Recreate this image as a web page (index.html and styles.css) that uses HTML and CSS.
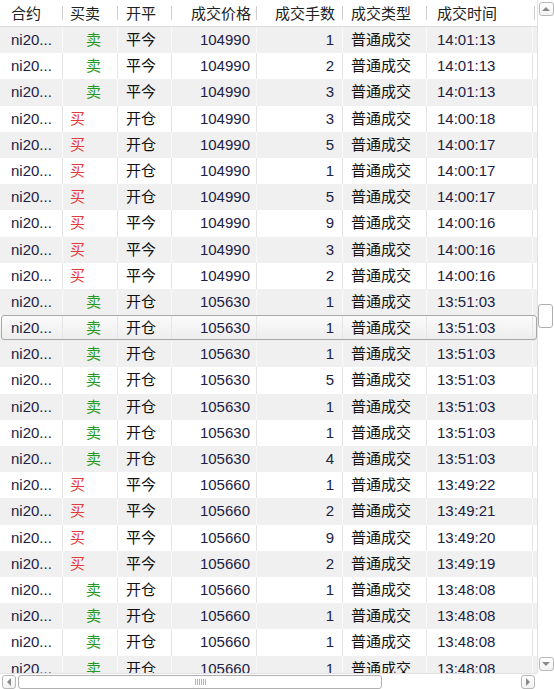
FILE: index.html
```html
<!DOCTYPE html>
<html>
<head>
<meta charset="utf-8">
<link rel="stylesheet" href="styles.css">
</head>
<body>
<div class="grid">
  <div class="view">
    <div class="head">
      <div class="hc c-code">合约</div>
      <div class="hc c-dir">买卖</div>
      <div class="hc c-oc">开平</div>
      <div class="hc c-price">成交价格</div>
      <div class="hc c-vol">成交手数</div>
      <div class="hc c-type">成交类型</div>
      <div class="hc c-time">成交时间</div>
      <div class="hc c-pad"></div>
    </div>
    <div class="body" id="body"></div>
  </div>
  <div class="vscroll">
    <div class="sbtn up"><span class="tri tri-up"></span></div>
    <div class="vtrack"><div class="vthumb"></div></div>
    <div class="sbtn down"><span class="tri tri-down"></span></div>
  </div>
  <div class="hscroll">
    <div class="sbtn left"><span class="tri tri-left"></span></div>
    <div class="htrack"><div class="hthumb"><span class="grip"></span></div></div>
    <div class="sbtn right"><span class="tri tri-right"></span></div>
  </div>
  <div class="corner"></div>
</div>
<script src="app.js"></script>
</body>
</html>
```
FILE: app.js
```js
var data = [
  ["卖","平今","104990","1","14:01:13"],
  ["卖","平今","104990","2","14:01:13"],
  ["卖","平今","104990","3","14:01:13"],
  ["买","开仓","104990","3","14:00:18"],
  ["买","开仓","104990","5","14:00:17"],
  ["买","开仓","104990","1","14:00:17"],
  ["买","开仓","104990","5","14:00:17"],
  ["买","平今","104990","9","14:00:16"],
  ["买","平今","104990","3","14:00:16"],
  ["买","平今","104990","2","14:00:16"],
  ["卖","开仓","105630","1","13:51:03"],
  ["卖","开仓","105630","1","13:51:03"],
  ["卖","开仓","105630","1","13:51:03"],
  ["卖","开仓","105630","5","13:51:03"],
  ["卖","开仓","105630","1","13:51:03"],
  ["卖","开仓","105630","1","13:51:03"],
  ["卖","开仓","105630","4","13:51:03"],
  ["买","平今","105660","1","13:49:22"],
  ["买","平今","105660","2","13:49:21"],
  ["买","平今","105660","9","13:49:20"],
  ["买","平今","105660","2","13:49:19"],
  ["卖","开仓","105660","1","13:48:08"],
  ["卖","开仓","105660","1","13:48:08"],
  ["卖","开仓","105660","1","13:48:08"],
  ["卖","开仓","105660","1","13:48:08"]
];
var body = document.getElementById("body");
data.forEach(function (d, i) {
  var row = document.createElement("div");
  row.className = "row " + (i % 2 === 0 ? "alt" : "plain") + (i === 11 ? " sel" : "");
  var dirCls = d[0] === "卖" ? "sell" : "buy";
  row.innerHTML =
    '<div class="cell c-code">ni20...</div>' +
    '<div class="cell c-dir ' + dirCls + '">' + d[0] + '</div>' +
    '<div class="cell c-oc">' + d[1] + '</div>' +
    '<div class="cell c-price">' + d[2] + '</div>' +
    '<div class="cell c-vol">' + d[3] + '</div>' +
    '<div class="cell c-type">普通成交</div>' +
    '<div class="cell c-time">' + d[4] + '</div>' +
    '<div class="cell c-pad"></div>';
  body.appendChild(row);
});
```
FILE: styles.css
```css
html, body {
  margin: 0;
  padding: 0;
  background: #ffffff;
}
.grid {
  width: 554px;
  height: 689px;
  display: grid;
  grid-template-columns: 537px 17px;
  grid-template-rows: 673px 16px;
  overflow: hidden;
  font-family: "Liberation Sans", "Noto Sans CJK SC", sans-serif;
  font-size: 15px;
  color: #1c2245;
}
.view {
  overflow: hidden;
  background: #fff;
}
.head, .row {
  display: grid;
  grid-template-columns: 63px 55px 54px 85px 86px 84px 106px 4px;
}
.head {
  height: 26px;
  border-bottom: 1px solid #dadada;
  color: #222;
}
.hc {
  position: relative;
  line-height: 27px;
  white-space: nowrap;
}
.hc::after {
  content: "";
  position: absolute;
  right: 0;
  top: 6px;
  height: 14px;
  width: 1px;
  background: #cfcfcf;
}
.hc.c-pad::after, .hc.c-time::after { display: none; }
.hc.c-time::before {
  content: "";
  position: absolute;
  right: -2px;
  top: 6px;
  height: 14px;
  width: 1px;
  background: #cfcfcf;
}
.row {
  height: 26.2px;
  box-sizing: border-box;
  position: relative;
}
.row.alt { background: #f0f0f0; }
.row.plain { background: #ffffff; }
.cell {
  line-height: 26px;
  white-space: nowrap;
  overflow: hidden;
}
.row.plain .cell { border-right: 1px solid #e4e4e4; }
.row.alt .cell { border-right: 1px solid #f9f9f9; }
.row .cell.c-pad { border-right: none; }
.row.sel {
  background: linear-gradient(#fcfcfc, #ececec);
}
.row.sel::after {
  content: "";
  position: absolute;
  left: 1px;
  right: 0;
  top: 0;
  bottom: 1px;
  border: 1px solid #a9a9a9;
  border-radius: 3px;
  pointer-events: none;
}
.row.sel .cell { border-right: 1px solid #e6e6e6; line-height: 25px; }
.row.sel .cell.c-pad { border-right: none; }

.c-code { padding-left: 11px; }
.c-dir { padding-left: 7px; }
.c-oc { padding-left: 8px; }
.c-price { text-align: right; padding-right: 6px; }
.c-vol { text-align: right; padding-right: 8px; }
.c-type { padding-left: 8px; }
.c-time { padding-left: 10px; }
.cell.c-type, .cell.c-oc { color: #111; }
.sell { color: #219a21; padding-left: 23px; }
.buy { color: #e63a3a; }

.vscroll {
  border-left: 1px solid #e2e2e2;
  display: flex;
  flex-direction: column;
  align-items: center;
  background: #fff;
  box-sizing: border-box;
}
.sbtn {
  box-sizing: border-box;
  width: 15px;
  height: 14px;
  border: 1px solid #b8b8b8;
  border-radius: 3px;
  display: flex;
  align-items: center;
  justify-content: center;
  background: linear-gradient(#ffffff, #f2f2f2);
  flex: none;
}
.vscroll .up { margin-top: 2px; }
.vscroll .down { margin-bottom: 2px; }
.vtrack {
  flex: 1;
  width: 100%;
  position: relative;
}
.vthumb {
  position: absolute;
  left: 0;
  width: 15px;
  top: 288px;
  height: 24px;
  box-sizing: border-box;
  border: 1px solid #b0b0b0;
  border-radius: 3px;
  background: #fff;
}
.tri { width: 0; height: 0; display: block; }
.tri-up { border-left: 4px solid transparent; border-right: 4px solid transparent; border-bottom: 4px solid #8a8a8a; }
.tri-down { border-left: 4px solid transparent; border-right: 4px solid transparent; border-top: 4px solid #8a8a8a; }
.tri-left { border-top: 4px solid transparent; border-bottom: 4px solid transparent; border-right: 4px solid #8a8a8a; }
.tri-right { border-top: 4px solid transparent; border-bottom: 4px solid transparent; border-left: 4px solid #8a8a8a; }

.hscroll {
  border-top: 1px solid #e2e2e2;
  display: flex;
  align-items: center;
  padding: 0 2px;
  box-sizing: border-box;
  background: #fff;
}
.hscroll .sbtn { width: 14px; height: 14px; }
.htrack {
  flex: 1;
  height: 14px;
  position: relative;
}
.hthumb {
  position: absolute;
  left: 2px;
  top: 0;
  width: 364px;
  height: 14px;
  box-sizing: border-box;
  border: 1px solid #b0b0b0;
  border-radius: 3px;
  background: #fff;
  display: flex;
  align-items: center;
  justify-content: center;
}
.grip {
  width: 11px;
  height: 6px;
  background: repeating-linear-gradient(90deg, #b5b5b5 0 1px, transparent 1px 2px);
}
.corner { background: #fff; }
```
